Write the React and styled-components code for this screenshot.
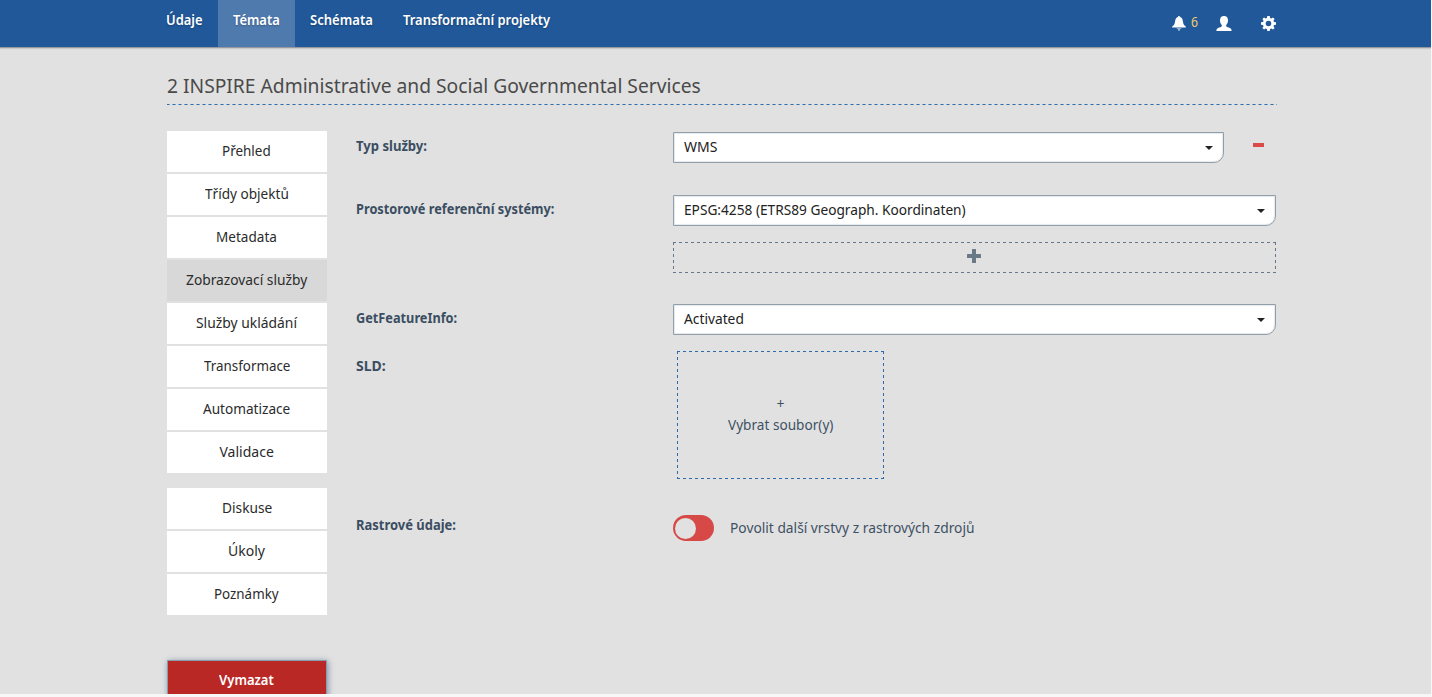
import React, { useLayoutEffect, useRef } from 'react';
import styled, { createGlobalStyle, css } from 'styled-components';

const Global = createGlobalStyle`
  * { box-sizing: border-box; }
  html, body { margin: 0; height: 100%; background: #f7f7f7; }
  body { font: 14px/20px "Noto Sans", "Open Sans", sans-serif; color: #2b2b2b; overflow: hidden; }
`;

/* Evenly spaced 3px dashes on all four sides */
const dashed = (c) => css`
  border: 0;
  background:
    repeating-linear-gradient(90deg, ${c} 0 3px, transparent 3px 6px) 0 0 / 100% 1px no-repeat,
    repeating-linear-gradient(90deg, ${c} 0 3px, transparent 3px 6px) 0 100% / 100% 1px no-repeat,
    repeating-linear-gradient(180deg, ${c} 0 3px, transparent 3px 6px) 0 0 / 1px 100% no-repeat,
    repeating-linear-gradient(180deg, ${c} 0 3px, transparent 3px 6px) 100% 0 / 1px 100% no-repeat;
`;

const Page = styled.div`
  width: 1431px;
  height: 694px;
  overflow: hidden;
  background: #e1e1e1;
`;
const FitBox = styled.span`
  display: inline-block;
  white-space: nowrap;
  flex: none;
  text-align: left;
  vertical-align: top;
`;
const FitText = styled.span`
  display: inline-block;
  transform-origin: 0 50%;
`;

/* Condenses a run of text to a fixed width */
function Fit({ w, children }) {
  const ref = useRef(null);
  useLayoutEffect(() => {
    const el = ref.current;
    el.style.transform = `scaleX(${w / el.offsetWidth})`;
  }, [w, children]);
  return (
    <FitBox style={{ width: w }}>
      <FitText ref={ref}>{children}</FitText>
    </FitBox>
  );
}

const Header = styled.header`
  height: 48px;
  background: #205899;
  border-bottom: 1px solid #98999d;
  box-shadow: 0 1px 1px rgba(0, 0, 0, 0.1);
  display: flex;
  justify-content: space-between;
  padding: 0 155px 0 151px;
`;
const Nav = styled.nav`
  display: flex;
`;
const NavItem = styled.a`
  padding: 10px 15px 0;
  color: #fff;
  font-weight: 600;
  text-shadow: 0 1px 2px rgba(0, 0, 0, 0.25);
  background: ${(p) => (p.$active ? '#4f7aae' : 'transparent')};
`;
const Tools = styled.div`
  display: flex;
  align-items: flex-start;
  padding-top: 16px;
  color: #fff;
  svg { display: block; fill: currentColor; }
`;
const Count = styled.span`
  width: 7px;
  margin: -4px 18px 0 5px;
  color: #f3cd6a;
`;
const Gap = styled.span`
  width: 29px;
`;

const Container = styled.main`
  width: 1110px;
  margin-left: 167px;
  padding-top: 22px;
`;
const Title = styled.h1`
  margin: 0;
  height: 35px;
  font-size: 20.5px;
  line-height: 30px;
  font-weight: 400;
  color: #4a4a4a;
  background: repeating-linear-gradient(90deg, #2d6eae 0 2px, #7fa3c6 2px 3px, transparent 3px 5px, #7fa3c6 5px 6px) 0 100% / 100% 1px no-repeat;
`;
const Columns = styled.div`
  display: flex;
  margin-top: 26px;
`;
const Side = styled.aside`
  width: 160px;
  margin-right: 29px;
`;
const Group = styled.div`
  display: flex;
  flex-direction: column;
  gap: 2px;
  margin-bottom: 15px;
`;
const SideItem = styled.a`
  height: 41px;
  line-height: 39px;
  text-align: center;
  padding-right: 1px;
  background: ${(p) => (p.$active ? '#d8d8d8' : '#fff')};
`;
const Delete = styled.button`
  display: block;
  width: 160px;
  height: 42px;
  margin-top: 45px;
  padding: 0 2px 2px 0;
  border: 1px solid #8b9cad;
  background: #b92825;
  color: #fff;
  font: 600 14px/20px "Noto Sans", sans-serif;
  box-shadow: 1px 1px 6px rgba(60, 90, 120, 0.6);
`;

const Form = styled.section`
  flex: 1;
`;
const Row = styled.div`
  display: flex;
  align-items: flex-start;
  height: ${(p) => p.$h}px;
`;
const Label = styled.label`
  width: 317px;
  padding-top: ${(p) => p.$top ?? 5}px;
  font-weight: 700;
  color: #3b4e61;
`;
const Field = styled.div`
  width: 603px;
  padding-top: ${(p) => p.$top ?? 1}px;
  display: flex;
  flex-wrap: wrap;
  align-items: flex-start;
`;
const Select = styled.div`
  width: ${(p) => p.$w || 603}px;
  height: 31px;
  border: 1px solid #929ea9;
  border-radius: 0 0 10px 0;
  background: #fff;
  box-shadow: inset 0 0 1px 1px #e6e9ec;
  padding: 4px 10px 0;
  display: flex;
  justify-content: space-between;
  color: #222;
`;
const Caret = styled.i`
  margin-top: 9px;
  height: 4px;
  border: 4px solid transparent;
  border-top-color: #222;
  border-bottom: 0;
`;
const Remove = styled.button`
  width: 11px;
  height: 4px;
  margin: 11px 0 0 29px;
  padding: 0;
  border: 0;
  background: #d94a48;
`;
const Add = styled.button`
  width: 603px;
  height: 31px;
  margin-top: 16px;
  padding: 0 1px 3px 0;
  display: flex;
  align-items: center;
  justify-content: center;
  ${dashed('#667789')}
`;
const Drop = styled.div`
  width: 207px;
  height: 128px;
  margin-left: 4px;
  color: #3f5164;
  display: flex;
  flex-direction: column;
  align-items: center;
  padding-top: 42px;
  line-height: 21px;
  ${dashed('#2e6ba8')}
`;
const Toggle = styled.span`
  width: 41px;
  height: 26px;
  margin-right: 16px;
  padding: 2.5px 2px;
  border-radius: 13px;
  background: #d64946;
  &::before {
    content: '';
    display: block;
    width: 21px;
    height: 21px;
    border-radius: 50%;
    background: #e1e1e1;
  }
`;
const ToggleText = styled.span`
  padding-top: 3px;
  color: #3f5164;
`;

const MENU = [
  ['Přehled', 49], ['Třídy objektů', 83.5], ['Metadata', 61], ['Zobrazovací služby', 121],
  ['Služby ukládání', 101], ['Transformace', 86], ['Automatizace', 87.5], ['Validace', 54],
];
const MENU2 = [['Diskuse', 50], ['Úkoly', 37], ['Poznámky', 65]];
const NAV = [['Údaje', 37], ['Témata', 47], ['Schémata', 62.5], ['Transformační projekty', 147]];

export default function App() {
  return (
    <>
      <Global />
      <Page>
        <Header>
          <Nav>
            {NAV.map(([t, w]) => (
              <NavItem key={t} $active={t === 'Témata'}><Fit w={w}>{t}</Fit></NavItem>
            ))}
          </Nav>
          <Tools>
            <svg width="14" height="15" viewBox="0 0 14 15">
              <path d="M7 0c.7 0 1 .5 1 1.100c1.900.5 2.600 2 2.900 4.100c.3 2.700 1 4 2.900 5.300v1H.2v-1C2.100 9.200 2.800 7.900 3.100 5.200C3.400 3.100 4.100 1.600 6 1.100C6 .5 6.300 0 7 0z" />
              <path d="M4 12.200h6L7.800 13.400v1.400H6.200v-1.400z" opacity=".65" />
            </svg>
            <Count><Fit w={7}>6</Fit></Count>
            <svg width="16" height="15" viewBox="0 0 16 15">
              <path d="M8 0c2.600 0 4 1.600 4 4.200c0 2-.6 3.600-1.800 4.700v1.300c.6.800 2.300 1.100 3.700 1.700c1.200.5 1.700 1.300 1.700 3.100H.4c0-1.800.5-2.600 1.700-3.100c1.400-.6 3.100-.9 3.700-1.700V8.900C4.600 7.800 4 6.200 4 4.200C4 1.600 5.400 0 8 0z" />
            </svg>
            <Gap />
            <svg width="15" height="15" viewBox="0 0 15 15">
              <path fillRule="evenodd" d="M6.300 0h2.400l.4 2l1.200.5L12 1.400l1.600 1.600l-1.100 1.700l.5 1.200l2 .4v2.400l-2 .4l-.5 1.200l1.100 1.700L12 13.600l-1.700-1.100l-1.200.5l-.4 2H6.300l-.4-2l-1.200-.5L3 13.600L1.400 12l1.100-1.700L2 9.100l-2-.4V6.300l2-.4l.5-1.200L1.400 3L3 1.400l1.700 1.100L5.900 2zM7.500 4.700a2.800 2.800 0 1 0 0 5.600a2.800 2.800 0 1 0 0-5.600z" />
            </svg>
          </Tools>
        </Header>
        <Container>
          <Title><Fit w={534}>2 INSPIRE Administrative and Social Governmental Services</Fit></Title>
          <Columns>
            <Side>
              <Group>
                {MENU.map(([t, w]) => (
                  <SideItem key={t} $active={t.startsWith('Zobr')}><Fit w={w}>{t}</Fit></SideItem>
                ))}
              </Group>
              <Group>
                {MENU2.map(([t, w]) => <SideItem key={t}><Fit w={w}>{t}</Fit></SideItem>)}
              </Group>
              <Delete><Fit w={55}>Vymazat</Fit></Delete>
            </Side>
            <Form>
              <Row $h={63}>
                <Label><Fit w={71}>Typ služby:</Fit></Label>
                <Field>
                  <Select $w={551}><Fit w={33}>WMS</Fit><Caret /></Select>
                  <Remove />
                </Field>
              </Row>
              <Row $h={109}>
                <Label><Fit w={198}>Prostorové referenční systémy:</Fit></Label>
                <Field>
                  <Select><Fit w={281.5}>EPSG:4258 (ETRS89 Geograph. Koordinaten)</Fit><Caret /></Select>
                  <Add>
                    <svg width="14" height="14" viewBox="0 0 14 14" fill="#6a7986">
                      <path d="M5 .5q0-.5.500-.5h3q.5 0 .5.5V5h4.500q.5 0 .5.5v3q0 .5-.5.5H9v4.500q0 .5-.5.5h-3q-.5 0-.5-.5V9H.5q-.5 0-.5-.5v-3q0-.5.5-.5H5z" />
                    </svg>
                  </Add>
                </Field>
              </Row>
              <Row $h={47}>
                <Label><Fit w={101}>GetFeatureInfo:</Fit></Label>
                <Field><Select><Fit w={60}>Activated</Fit><Caret /></Select></Field>
              </Row>
              <Row $h={160}>
                <Label $top={6}><Fit w={30}>SLD:</Fit></Label>
                <Field>
                  <Drop><Fit w={8}>+</Fit><Fit w={105}>Vybrat soubor(y)</Fit></Drop>
                </Field>
              </Row>
              <Row $h={40}>
                <Label><Fit w={100}>Rastrové údaje:</Fit></Label>
                <Field $top={5}>
                  <Toggle />
                  <ToggleText><Fit w={244}>Povolit další vrstvy z rastrových zdrojů</Fit></ToggleText>
                </Field>
              </Row>
            </Form>
          </Columns>
        </Container>
      </Page>
    </>
  );
}
